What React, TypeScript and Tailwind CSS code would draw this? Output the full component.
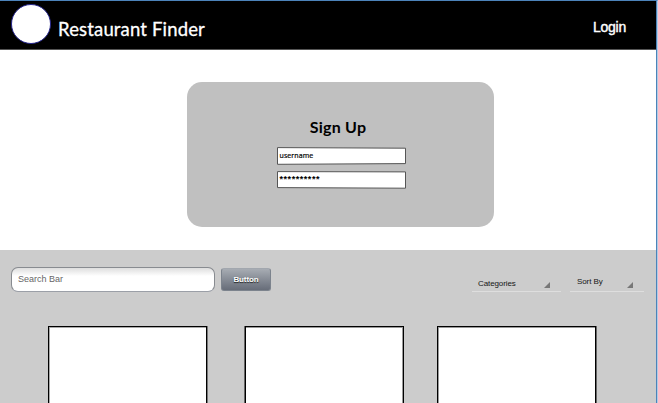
import React from 'react';

function Field({ outline, children }: { outline: string; children: React.ReactNode }) {
  return (
    <div className="relative h-[18px] w-[129px]">
      <svg className="absolute inset-0" width="129" height="18" viewBox="0 0 129 18">
        <path d={outline} fill="#fff" stroke="#555" strokeWidth="1" />
      </svg>
      {children}
    </div>
  );
}

function Dropdown({ label, box, text, arrow }: { label: string; box: string; text: string; arrow: string }) {
  return (
    <div className={`flex h-[24px] justify-between border-b border-[#dedede] ${box}`}>
      <span className={`text-[8px] leading-[10px] whitespace-nowrap text-[#161616] ${text}`}>{label}</span>
      <svg className={`mt-[14px] ${arrow}`} width="6" height="6" viewBox="0 0 6 6">
        <path d="M6 0V6H0Z" fill="#777" />
      </svg>
    </div>
  );
}

export default function App() {
  return (
    <div className="flex h-[403px] w-[658px] overflow-hidden bg-white font-['Liberation_Sans',Arial,sans-serif]">
      <div className="flex w-[656px] flex-col border-t border-[#4c83ba]">
        <header className="flex h-[49px] shrink-0 justify-between border-b border-[#555] bg-black pr-[30px] pl-[11px] text-white">
          <div className="flex">
            <div className="mt-[3px] size-[40px] rounded-full border border-[#25258c] bg-white" />
            <h1 className="mt-[16px] ml-[7px] font-['Lato',sans-serif] text-[18.5px] leading-[24px] tracking-[0.16px] whitespace-nowrap [-webkit-text-stroke:0.3px_white]">
              Restaurant Finder
            </h1>
          </div>
          <a className="mt-[16px] text-[14px] leading-[20px] tracking-[-0.25px] [-webkit-text-stroke:0.4px_white]">Login</a>
        </header>

        <main className="flex h-[200px] shrink-0 justify-center pt-[32px] pl-[25px]">
          <section className="flex h-[145px] w-[307px] flex-col items-center rounded-[15px] bg-[#c0c0c0] pt-[35px]">
            <h2 className="mr-[5px] h-[30px] font-['Lato',sans-serif] text-[16px] leading-[20px] font-bold tracking-[0.25px] text-black">Sign Up</h2>
            <div className="ml-px flex flex-col gap-[6px]">
              <Field outline="M.5 .6L128.5 1.2V16.6L.5 17.3Z">
                <span className="absolute top-[4px] left-[3px] font-['Open_Sans',sans-serif] text-[7px] leading-[10px] tracking-[0.1px] text-black [-webkit-text-stroke:0.2px_black]">username</span>
              </Field>
              <Field outline="M.5 .6L128.5 .9V17.2L.5 16.6Z">
                <span className="absolute top-[3px] left-[3px] text-[9px] leading-[10px] font-bold tracking-[0.55px] text-black">**********</span>
              </Field>
            </div>
          </section>
        </main>

        <section className="h-[153px] shrink-0 bg-[#ccc]">
          <div className="flex h-[76px] pt-[17px] pl-[11px]">
            <div className="h-[25px] w-[204px] rounded-[7px] border border-[#888b90] border-b-[#9b9fa7] bg-linear-to-b from-[#dedede] via-white via-35% to-white pt-[6px] pl-[6px] text-[9px] leading-[10px] text-[#666]">
              Search Bar
            </div>
            <button className="mt-[1px] ml-[6px] h-[23px] w-[50px] rounded-[3px] border border-[#7c838d] border-t-[#a2a7ae] bg-linear-to-b from-[#a7acb3] to-[#676d79] text-[8px] leading-[20px] font-bold tracking-[-0.1px] text-white [text-shadow:0_1px_1px_#222]">
              Button
            </button>
            <Dropdown label="Categories" box="mt-px ml-[201px] w-[89px] pl-[6px]" text="mt-[11px] tracking-[-0.1px]" arrow="mr-[11px]" />
            <Dropdown label="Sort By" box="mt-px ml-[9px] w-[74px] pl-[7px]" text="mt-[9px] tracking-[-0.1px]" arrow="mr-[11px]" />
          </div>
          <div className="flex h-[77px] pl-[48px]">
            <div className="h-[90px] w-[159px] border border-black bg-white shadow-[inset_1px_1px_0_#aaa,1px_0_0_#777]" />
            <div className="ml-[38px] h-[90px] w-[159px] border border-black bg-white shadow-[inset_-1px_1px_0_#999,-1px_0_0_#666]" />
            <div className="ml-[33px] h-[90px] w-[159px] border border-black bg-white shadow-[inset_1px_1px_0_#999,1px_0_0_#666]" />
          </div>
        </section>
      </div>
      <div className="w-[2px] border-t border-r border-t-[#4c83ba] border-r-[#b4cbe3] bg-[#4c83ba]" />
    </div>
  );
}
